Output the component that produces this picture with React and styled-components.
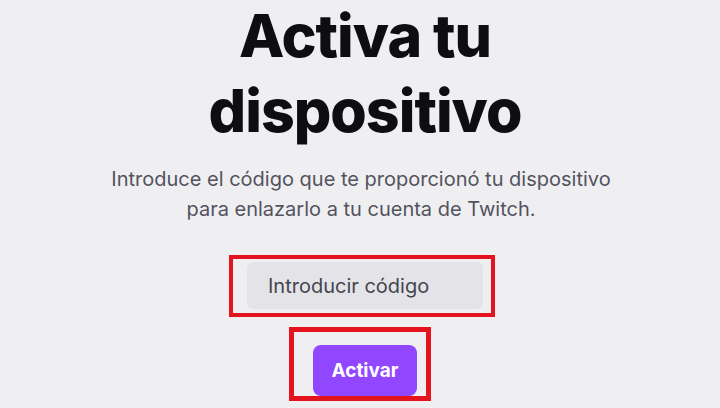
import React, { useState } from 'react';
import styled, { createGlobalStyle } from 'styled-components';

const GlobalStyle = createGlobalStyle`
  html, body {
    margin: 0;
    padding: 0;
    background: #efeff1;
    overflow: hidden;
  }
  body {
    font-family: Inter, "Noto Sans", "Liberation Sans", sans-serif;
  }
`;

const Page = styled.div`
  width: 720px;
  height: 408px;
  box-sizing: border-box;
  padding-left: 10px;
  display: flex;
  flex-direction: column;
  align-items: center;
  background: #efeff1;
  color: #0e0e10;
`;

const Title = styled.h1`
  margin: -2px 0 0;
  font-size: 59px;
  line-height: 75px;
  font-weight: 800;
  letter-spacing: -1px;
  text-align: center;
  width: 360px;
`;

const Subtitle = styled.p`
  margin: 16px 0 0;
  font-size: 20px;
  line-height: 30px;
  color: #53535f;
  text-align: center;
  margin-right: 8px;
`;

// red annotation frames drawn round the form parts
const Highlight = styled.div`
  display: flex;
  align-items: flex-start;
  border: ${p => p.$border}px solid #e3141d;
  padding: ${p => p.$pad};
  margin-top: ${p => p.$top}px;
  margin-right: ${p => p.$shift}px;
`;

const CodeInput = styled.input`
  width: 236px;
  height: 47px;
  box-sizing: border-box;
  border: none;
  border-radius: 6px;
  background: #e4e4e8;
  padding: 0 0 0 21px;
  font-family: inherit;
  font-size: 20px;
  color: #0e0e10;
  outline: none;

  &::placeholder {
    color: #45454d;
  }
`;

const ActivateButton = styled.button`
  width: 104px;
  height: 51px;
  border: none;
  border-radius: 8px;
  background: #9147ff;
  color: #fff;
  font-family: inherit;
  font-size: 19px;
  font-weight: 700;
  cursor: pointer;
`;

export default function App() {
  const [code, setCode] = useState('');

  return (
    <>
      <GlobalStyle />
      <Page>
        <Title>Activa tu dispositivo</Title>
        <Subtitle>
          Introduce el código que te proporcionó tu dispositivo
          <br />
          para enlazarlo a tu cuenta de Twitch.
        </Subtitle>
        <Highlight $border={4} $pad="3px 8px 4px 14px" $top={31} $shift={6}>
          <CodeInput
            placeholder="Introducir código"
            value={code}
            onChange={e => setCode(e.target.value)}
          />
        </Highlight>
        <Highlight $border={5} $pad="13px 9px 0 19px" $top={10} $shift={10}>
          <ActivateButton>Activar</ActivateButton>
        </Highlight>
      </Page>
    </>
  );
}
